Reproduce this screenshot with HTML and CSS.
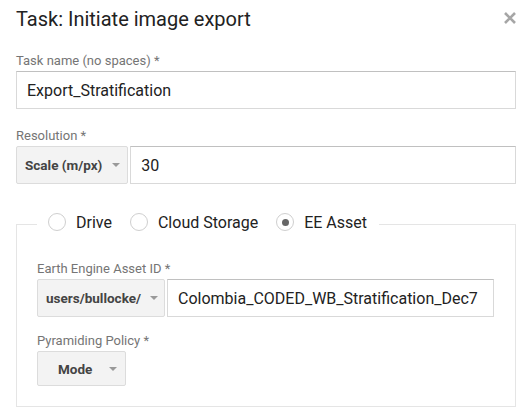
FILE: index.html
```html
<!DOCTYPE html>
<html>
<head>
<meta charset="utf-8">
<link rel="stylesheet" href="styles.css">
</head>
<body>
<div class="dialog">
  <div class="dialog-header">
    <h1 class="dialog-title">Task: Initiate image export</h1>
    <span class="close" aria-label="Close">
      <svg width="14" height="14" viewBox="0 0 14 14"><path d="M2 2 L12 12 M12 2 L2 12" stroke="#a6a6a6" stroke-width="2.6" stroke-linecap="butt" fill="none"/></svg>
    </span>
  </div>

  <div class="field">
    <div class="label">Task name (no spaces) *</div>
    <div class="input">Export_Stratification</div>
  </div>

  <div class="field">
    <div class="label">Resolution *</div>
    <div class="row">
      <div class="select">Scale (m/px)<span class="arrow"></span></div>
      <div class="input input-grow">30</div>
    </div>
  </div>

  <fieldset class="dest">
    <legend class="dest-legend">
      <span class="radio"><span class="radio-circle"></span>Drive</span>
      <span class="radio"><span class="radio-circle"></span>Cloud Storage</span>
      <span class="radio"><span class="radio-circle checked"></span>EE Asset</span>
    </legend>

    <div class="field">
      <div class="label">Earth Engine Asset ID *</div>
      <div class="row">
        <div class="select select-asset">users/bullocke/<span class="arrow"></span></div>
        <div class="input input-grow">Colombia_CODED_WB_Stratification_Dec7</div>
      </div>
    </div>

    <div class="field field-last">
      <div class="label">Pyramiding Policy *</div>
      <div class="row">
        <div class="select select-mode">Mode<span class="arrow"></span></div>
      </div>
    </div>
  </fieldset>
</div>
</body>
</html>
```

FILE: styles.css
```css
* { box-sizing: border-box; }

html, body {
  margin: 0;
  padding: 0;
  background: #ffffff;
}

body {
  font-family: Roboto, "Liberation Sans", Arial, sans-serif;
  color: #222;
}

.dialog {
  width: 529px;
  padding: 7px 13px 0 16px;
}

.dialog-header {
  display: flex;
  align-items: flex-start;
  justify-content: space-between;
}

.dialog-title {
  margin: 0;
  font-size: 20px;
  line-height: 24px;
  font-weight: 400;
  color: #222;
}

.close {
  display: flex;
  margin-top: 4px;
  margin-right: -1px;
}

.field {
  margin-top: 22px;
}

.field + .field {
  margin-top: 19px;
}

.label {
  font-size: 13px;
  line-height: 16px;
  color: #757575;
  margin-bottom: 2px;
}

.row {
  display: flex;
  gap: 2px;
}

.input {
  height: 38px;
  display: flex;
  align-items: center;
  padding: 0 10px;
  border: 1px solid #d9d9d9;
  border-top-color: #c0c0c0;
  font-size: 16px;
  color: #222;
  white-space: nowrap;
}

.input-grow {
  flex: 1;
  min-width: 0;
}

.select {
  height: 38px;
  display: flex;
  align-items: center;
  padding: 0 7px 0 8px;
  background: #f3f3f3;
  border: 1px solid #dcdcdc;
  border-radius: 2px;
  font-size: 13.5px;
  font-weight: 700;
  color: #444;
  white-space: nowrap;
}

.select-asset {
  padding-right: 6px;
}

.select-asset .arrow {
  margin-left: 9px;
}

.select-mode {
  height: 35px;
  padding-left: 20px;
  padding-right: 8px;
}

.arrow {
  width: 0;
  height: 0;
  margin-left: 10px;
  border-left: 4px solid transparent;
  border-right: 4px solid transparent;
  border-top: 4px solid #999;
}

.select-mode .arrow {
  margin-left: 17px;
}

.dest {
  margin: 28px 0 0 0;
  padding: 25px 21px 20px 20px;
  border: 1px solid #e5e5e5;
  min-width: 0;
}

.dest-legend {
  padding: 0 12px 4px 11px;
  margin-left: 0;
  display: flex;
  align-items: center;
  height: 24px;
  font-size: 16px;
}

.radio {
  display: inline-flex;
  align-items: center;
  margin-right: 18px;
  color: #222;
}

.radio:last-child {
  margin-right: 0;
}

.radio-circle {
  width: 18px;
  height: 18px;
  border-radius: 50%;
  border: 1px solid #cfcfcf;
  margin-right: 10px;
  display: flex;
  align-items: center;
  justify-content: center;
}

.radio-circle.checked::after {
  content: "";
  width: 7px;
  height: 7px;
  border-radius: 50%;
  background: #666;
}

.dest .field {
  margin-top: 0;
}

.dest .field + .field {
  margin-top: 16px;
}
```
